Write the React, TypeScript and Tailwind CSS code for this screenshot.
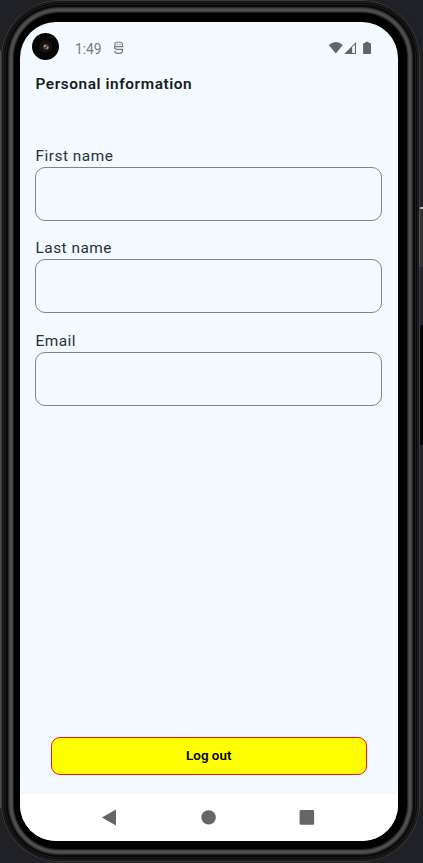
function Field({ label }: { label: string }) {
  return (
    <label className="block h-[92.4px]">
      <span className="block h-[20px] pl-[0.5px] text-[15.4px] leading-[18.5px] tracking-[0.5px] text-[#293036]">{label}</span>
      <input
        aria-label={label}
        className="block h-[54px] w-[347px] rounded-[10px] border border-[#7f838b] bg-transparent px-3 outline-none"
      />
    </label>
  );
}

function StatusBar() {
  return (
    <div className="flex h-[52px] items-start pl-[12px] pr-[26px] pt-[11px]">
      <div className="flex size-[27px] items-center justify-center rounded-full bg-[#050505]">
        <div className="flex size-[13px] items-center justify-center rounded-full bg-[#131111]">
          <svg width="8" height="8" viewBox="0 0 8 8">
            <circle cx="4" cy="4" r="3" fill="#493a35" />
            <circle cx="3" cy="3" r="1.3" fill="#ad8975" />
            <circle cx="5.4" cy="4.8" r="1.1" fill="#d5a68b" />
            <circle cx="4" cy="4.4" r="0.7" fill="#171314" />
          </svg>
        </div>
      </div>
      <span className="ml-[16px] mt-[8px] text-[13.8px] leading-[17px] text-[#777b7e]">1:49</span>
      <svg className="ml-[11px] mt-[8px]" width="12" height="14" viewBox="0 0 12 14" fill="none" stroke="#74787b" strokeWidth="1.1">
        <path d="M1.9 5.5V3.2Q1.9 1.2 3.9 1.2H7.4Q9.4 1.2 9.4 3.2V5.5M1 5.6H10.3M1.8 6V7.4L3.4 8.4H9.5V9.6Q9.5 12.4 6.6 12.4H4.7Q1.9 12.4 1.7 9.9" />
        <path d="M3.7 3.5H4.8M6.5 3.5H7.6" strokeWidth="1.2" />
      </svg>
      <svg className="ml-auto mt-[8px]" width="44" height="14" viewBox="0 0 44 14" fill="#626567">
        <path d="M0.8 4Q7.8-1.8 14.8 4L7.8 12.5Z" />
        <path d="M16.2 13L28 1.1V13ZM24.2 6V11.9H26.9V3.4Z" fillRule="evenodd" />
        <path d="M37.4 0.8H40.6V2H42.2Q43 2 43 2.8V12.2Q43 13 42.2 13H35.9Q35.1 13 35.1 12.2V2.8Q35.1 2 35.9 2H37.4Z" />
      </svg>
    </div>
  );
}

function NavigationBar() {
  return (
    <nav className="h-[47px] shrink-0 bg-white">
      <svg width="378" height="46" viewBox="0 0 378 46" fill="#666">
        <path d="M82.7 22.9Q81.7 23.5 82.7 24.1L96 31.5V15.5Z" />
        <circle cx="188.6" cy="23.4" r="7.2" />
        <rect x="279.6" y="16.1" width="14.5" height="14.6" rx="1.3" />
      </svg>
    </nav>
  );
}

export default function App() {
  return (
    <div className="relative h-[863px] w-[423px] overflow-hidden bg-[#202127] pl-px font-['Roboto',sans-serif]">
      <div className="absolute left-0 top-[50px] h-[758px] w-[2px] bg-[#4b4c47]" />
      <div className="absolute left-[55px] top-0 h-[2px] w-[312px] bg-[#55565a]" />
      <div className="absolute right-0 top-[80px] h-[720px] w-[3px] bg-[#25242e]" />
      <div className="absolute right-0 top-[207px] z-10 h-[60px] w-[4px] rounded-l-[2px] border-l border-t-2 border-l-[#555] border-t-[#bbb] bg-[#333]" />
      <div className="absolute right-0 top-[325px] z-10 h-[120px] w-[4px] rounded-l-[2px] border-l border-[#444] bg-[#050505]" />
      <div className="relative h-[862px] w-[419px] rounded-[58px] bg-black pb-[22px] pl-[19px] pr-[22px] pt-[22px] shadow-[inset_0_0_0_1px_#3b3b39,inset_0_0_0_2px_#141414,inset_0_0_0_3px_#222222,inset_0_0_0_4px_#080808,inset_0_0_0_5px_#1c1c1c,inset_0_0_0_7px_#080808,inset_0_0_0_8px_#2b2b2b,inset_0_0_0_9px_#3f3f3f,inset_0_0_0_11px_#505050,inset_0_0_0_12px_#404040,inset_0_0_0_13px_#202020]">
        <main className="flex h-[819px] w-[378px] flex-col overflow-hidden rounded-[36px] bg-[#f2faff]">
          <StatusBar />
          <div className="flex flex-1 flex-col pl-[15px]">
            <h1 className="h-[72.8px] pl-[0.5px] text-[15.4px] font-semibold leading-[20px] tracking-[0.57px] text-[#171d22]">Personal information</h1>
            <Field label="First name" />
            <Field label="Last name" />
            <Field label="Email" />
            <button className="mb-[19px] ml-[15.5px] mt-auto h-[38px] w-[316.5px] rounded-[9px] border border-[#ff1010] bg-[#ffff00] text-[13.4px] font-semibold text-black">Log out</button>
          </div>
          <NavigationBar />
        </main>
      </div>
    </div>
  );
}
